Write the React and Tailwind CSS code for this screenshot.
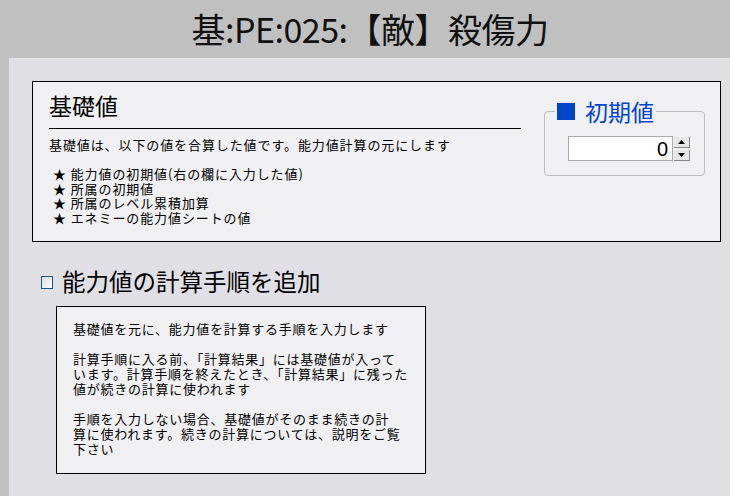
export default function App() {
  const jp = { fontFamily: '"Noto Sans CJK JP", "Noto Sans", sans-serif' };
  return (
    <div className="w-[730px] h-[496px] overflow-hidden bg-[#c0c0c0] text-black" style={jp}>
      <header className="h-[58px] flex items-center justify-center">
        <h1 className="text-[34px] leading-none tracking-[-0.5px] text-[#111] ml-[10px]">基:PE:025:【敵】殺傷力</h1>
      </header>
      <main className="ml-[9px] h-[438px] bg-[#e0dfe4] pt-[23px] pl-[23px] pr-[9px]">
        <section className="h-[161px] border border-black bg-[#f0f0f2] flex">
          <div className="w-[488px] pl-[16px] pt-[9px]">
            <h2 className="text-[23px] leading-[28px] pb-[9px] border-b border-black">基礎値</h2>
            <p className="text-[13px] tracking-[0.9px] leading-[15px] mt-[8px] whitespace-nowrap">基礎値は、以下の値を合算した値です。能力値計算の元にします</p>
            <ul className="mt-[15px] text-[13px] tracking-[0.9px] leading-[14.5px] pl-[4px]">
              <li>★ 能力値の初期値(右の欄に入力した値)</li>
              <li>★ 所属の初期値</li>
              <li>★ 所属のレベル累積加算</li>
              <li>★ エネミーの能力値シートの値</li>
            </ul>
          </div>
          <div className="pl-[23px] pt-[17px]">
            <fieldset className="w-[161px] h-[77px] border border-[#bfbcc0] rounded-[4px] px-[10px]">
              <legend className="flex items-center px-[2px] text-[#0044cc] text-[23px] leading-[24px]">
                <span className="inline-block w-[18px] h-[17px] bg-[#0044cc] mr-[10px]"></span>
                <span>初期値</span>
              </legend>
              <div className="flex mt-[13px] ml-[13px]">
                <div className="w-[105px] h-[25px] border border-[#a9a9a9] bg-white flex items-center justify-end pr-[4px] text-[20px] leading-none" style={{ fontFamily: '"Liberation Sans", sans-serif' }}>0</div>
                <div className="flex flex-col ml-[1px] gap-[2px] pt-[1px]">
                  <div className="w-[16px] h-[11px] bg-[#e6e6e6] border-b border-r border-[#888] flex items-center justify-center">
                    <svg width="7" height="4" viewBox="0 0 7 4"><path d="M3.5 0 L7 4 L0 4 Z" fill="#000" /></svg>
                  </div>
                  <div className="w-[16px] h-[11px] bg-[#e6e6e6] border-b border-r border-[#888] flex items-center justify-center">
                    <svg width="7" height="4" viewBox="0 0 7 4"><path d="M0 0 L7 0 L3.5 4 Z" fill="#000" /></svg>
                  </div>
                </div>
              </div>
            </fieldset>
          </div>
        </section>
        <div className="mt-[25px] h-[30px] flex items-center">
          <span className="ml-[9px] w-[12px] h-[13px] border border-[#1c5180] bg-gradient-to-br from-[#dcdcdc] to-white"></span>
          <span className="ml-[9px] text-[23.5px] leading-none">能力値の計算手順を追加</span>
        </div>
        <div className="mt-[9px] ml-[24px] w-[370px] h-[168px] border border-black bg-[#f0f0f2] pl-[16px] pt-[14px] text-[13px] tracking-[0.75px] leading-[15px] whitespace-nowrap">
          <p>基礎値を元に、能力値を計算する手順を入力します</p>
          <p className="mt-[15px]">計算手順に入る前、「計算結果」には基礎値が入って<br />います。計算手順を終えたとき、「計算結果」に残った<br />値が続きの計算に使われます</p>
          <p className="mt-[15px]">手順を入力しない場合、基礎値がそのまま続きの計<br />算に使われます。続きの計算については、説明をご覧<br />下さい</p>
        </div>
      </main>
    </div>
  );
}
